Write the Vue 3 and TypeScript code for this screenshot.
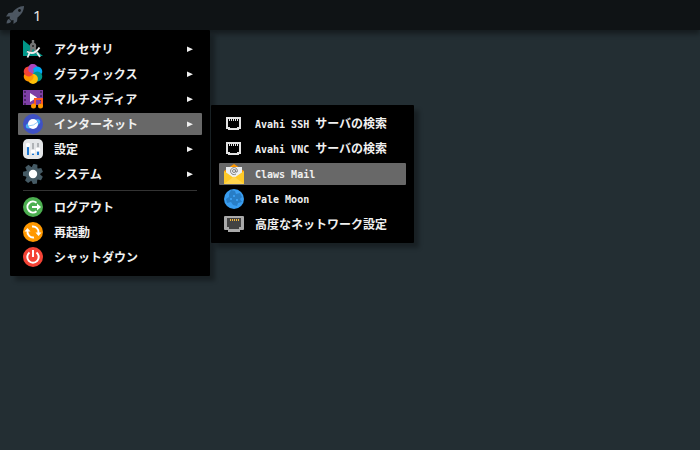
<script setup lang="ts">
import { ref } from 'vue'

interface Part {
  text: string
  latin?: boolean
}
interface Entry {
  id: string
  icon: string
  parts: Part[]
  children?: Entry[]
}

const network: Entry[] = [
  { id: 'ssh', icon: 'port', parts: [{ text: 'Avahi SSH ', latin: true }, { text: 'サーバの検索' }] },
  { id: 'vnc', icon: 'port', parts: [{ text: 'Avahi VNC ', latin: true }, { text: 'サーバの検索' }] },
  { id: 'claws', icon: 'mail', parts: [{ text: 'Claws Mail', latin: true }] },
  { id: 'moon', icon: 'moon', parts: [{ text: 'Pale Moon', latin: true }] },
  { id: 'netconf', icon: 'jack', parts: [{ text: '高度なネットワーク設定' }] },
]

const applications: Entry[] = [
  { id: 'accessories', icon: 'compass', parts: [{ text: 'アクセサリ' }], children: [] },
  { id: 'graphics', icon: 'flower', parts: [{ text: 'グラフィックス' }], children: [] },
  { id: 'multimedia', icon: 'media', parts: [{ text: 'マルチメディア' }], children: [] },
  { id: 'internet', icon: 'planet', parts: [{ text: 'インターネット' }], children: network },
  { id: 'settings', icon: 'sliders', parts: [{ text: '設定' }], children: [] },
  { id: 'system', icon: 'gear', parts: [{ text: 'システム' }], children: [] },
]

const session: Entry[] = [
  { id: 'logout', icon: 'logout', parts: [{ text: 'ログアウト' }] },
  { id: 'restart', icon: 'restart', parts: [{ text: '再起動' }] },
  { id: 'shutdown', icon: 'power', parts: [{ text: 'シャットダウン' }] },
]

const open = ref('internet')
const selected = ref('claws')
const petals = ['#ab47bc', '#03a9f4', '#009688', '#ffc107', '#ff9800', '#f44336']
</script>

<template>
  <div class="desktop">
    <svg class="sprite" aria-hidden="true">
      <symbol id="rocket" viewBox="0 0 20 20">
        <path fill="#4c5661" d="M19 1C14 1 10 4 7.500 7.500L3.500 8 1 11.500 5 11.500 4.500 13.500 6.500 15.500 8.500 15 8.500 19 12 16.500 12.500 12.500C16 10 19 6 19 1z" />
        <circle cx="14.500" cy="5.500" r="1.400" fill="#0f1315" />
        <path d="M4 14Q2 14 1.500 18.500 6 18 6 16z" fill="#4c5661" />
      </symbol>
      <symbol id="compass" viewBox="0 0 20 20">
        <path d="M0 1L20 17H0z" fill="#009688" />
        <path d="M4 11v3h4z" fill="#00201d" />
        <path d="M10 1v5M9.500 7L7 14M10.500 7l3 7" stroke="#757575" stroke-width="2.400" />
        <circle cx="10" cy="7" r="3.200" fill="#757575" />
        <circle cx="10" cy="7" r="1" fill="#222" />
        <path d="M4 12.500Q11 17 16.500 8.500M6.500 14L4.500 18.500M14 13.500l3 4.500" fill="none" stroke="#eee" stroke-width="1.800" />
      </symbol>
      <symbol id="flower" viewBox="0 0 20 20">
        <circle
          v-for="(color, i) in petals"
          :key="color"
          cx="10"
          cy="5"
          r="4.900"
          :fill="color"
          :transform="`rotate(${i * 60} 10 10)`"
        />
        <path d="M10 10V0.100A4.900 4.900 0 0 0 5.800 7.500z" fill="#ab47bc" />
      </symbol>
      <symbol id="media" viewBox="0 0 20 20">
        <rect y="1" width="20" height="15" fill="#7e3fa5" />
        <path d="M2 2v14M18 2v14" stroke="#4d2569" stroke-width="2" stroke-dasharray="2 2" />
        <path d="M7 4l7 4.500L7 13z" fill="#fff" />
        <path d="M12 17V10h7v7" fill="none" stroke="#ff5722" stroke-width="2" />
        <circle cx="10.500" cy="17" r="2.500" fill="#ff9800" />
        <circle cx="17.500" cy="17" r="2.500" fill="#ff9800" />
      </symbol>
      <symbol id="planet" viewBox="0 0 20 20">
        <circle cx="10" cy="10" r="10" fill="#3f51c5" />
        <ellipse cx="10" cy="10" rx="7" ry="2.500" fill="none" stroke="#40b6f5" stroke-width="1.600" transform="rotate(-25 10 10)" />
        <circle cx="10" cy="10" r="5" fill="#fff" />
        <path d="M4.500 12.200Q11 12 15.500 7.500" fill="none" stroke="#90caf9" stroke-width="1" />
      </symbol>
      <symbol id="sliders" viewBox="0 0 20 20">
        <rect width="20" height="20" rx="5" fill="#e4e6e8" />
        <path d="M5 4v12M10 4v12M15 4v12" stroke="#b0b3b6" stroke-width="2" />
        <path d="M5 7v9M10 13v3M15 11v5" stroke="#1e78d2" stroke-width="2" />
        <g fill="#fff">
          <circle cx="5" cy="6" r="2.200" /><circle cx="10" cy="12.500" r="2.200" /><circle cx="15" cy="10.500" r="2.200" />
        </g>
      </symbol>
      <symbol id="gear" viewBox="0 0 20 20">
        <g fill="#455a64">
          <path v-for="n in 7" :key="n" d="M6.800 4.500L8 0h4l1.200 4.500z" :transform="`rotate(${n * 51.43 + 14} 10 10)`" />
          <circle cx="10" cy="10" r="7.200" />
        </g>
        <circle cx="10" cy="10" r="4.200" fill="#fff" />
      </symbol>
      <symbol id="logout" viewBox="0 0 20 20">
        <circle cx="10" cy="10" r="10" fill="#4caf50" />
        <path d="M13.500 5.800A5.500 5.500 0 1 0 13.500 14.200M9 10h6" fill="none" stroke="#fff" stroke-width="2" />
        <path d="M14 6.500l4 3.500-4 3.500z" fill="#fff" />
      </symbol>
      <symbol id="restart" viewBox="0 0 20 20">
        <circle cx="10" cy="10" r="10" fill="#ff9800" />
        <path d="M9 4.500A5.700 5.700 0 0 1 15.500 11M11 15.500A5.700 5.700 0 0 1 4.500 9" fill="none" stroke="#fff" stroke-width="2" />
        <path d="M12.500 10.500h6L15.500 14zM1.500 9.500h6L4.500 6z" fill="#fff" />
      </symbol>
      <symbol id="power" viewBox="0 0 20 20">
        <circle cx="10" cy="10" r="10" fill="#f44336" />
        <path d="M6.500 5.500A5.700 5.700 0 1 0 13.500 5.500M10 3v7" fill="none" stroke="#fff" stroke-width="2" />
      </symbol>
      <symbol id="port" viewBox="0 0 20 20">
        <path d="M3 4H16V14H14V15H5V14H3z" fill="none" stroke="#e2e2e2" stroke-width="2" />
        <path d="M5.500 5v2M7.500 5v2M9.500 5v2M11.500 5v2M13.500 5v2" stroke="#e2e2e2" />
      </symbol>
      <symbol id="mail" viewBox="0 0 20 20">
        <path d="M0 7L10 0l10 7v5H0z" fill="#ff9800" />
        <path d="M2 3h16v12H2z" fill="#eceff1" />
        <path d="M0 7l10 7 10-7v13H0z" fill="#ffca28" />
        <path d="M0 20L10 12.500 20 20z" fill="#ffd54f" />
        <circle cx="10" cy="7" r="1.500" fill="none" stroke="#757575" stroke-width=".9" />
        <path d="M11.700 5.500v2.500q1.800 .8 1.800-1.500A3.500 3.500 0 1 0 12 10" fill="none" stroke="#757575" stroke-width=".9" />
      </symbol>
      <symbol id="moon" viewBox="0 0 20 20">
        <circle cx="10" cy="10" r="10" fill="#399df0" />
        <path fill="#287dc5" d="M7 1l4 1 1 3 4-1 2 4-2 2 2 3-4 1-1 3-4-1-2-3-4 1-1-4 3-2V5z" />
        <path fill="#399df0" d="M9 6h2v2H9zM6 9h2v2H6zM12 10h2v2h-2z" />
      </symbol>
      <symbol id="jack" viewBox="0 0 20 20">
        <path d="M1 2h18q1 0 1 1v12q0 1-1 1h-3v2H4v-2H1q-1 0-1-1V3q0-1 1-1z" fill="#a9a9a9" />
        <path d="M3 4h14v9h-2v2H5v-2H3z" fill="#424242" />
        <path d="M6.500 5v2M8.500 5v2M10.500 5v2M12.500 5v2M14.500 5v2" stroke="#f5b83d" />
      </symbol>
    </svg>

    <header class="panel">
      <button class="launcher" type="button" aria-label="メニュー">
        <svg class="icon"><use href="#rocket" /></svg>
      </button>
      <button class="workspace" type="button">1</button>
    </header>

    <nav class="menu root-menu">
      <ul class="list">
        <li v-for="entry in applications" :key="entry.id" class="row">
          <button type="button" class="item" :class="{ active: open === entry.id }" @click="open = entry.id">
            <svg class="icon" aria-hidden="true"><use :href="`#${entry.icon}`" /></svg>
            <span class="label">{{ entry.parts[0].text }}</span>
            <svg class="arrow" viewBox="0 0 6 6" aria-hidden="true"><path d="M0 .5L6 3.300 0 6z" /></svg>
          </button>
          <ul v-if="open === entry.id && entry.children?.length" class="menu submenu list">
            <li v-for="child in entry.children" :key="child.id">
              <button type="button" class="item" :class="{ active: selected === child.id }" @click="selected = child.id">
                <svg class="icon" aria-hidden="true"><use :href="`#${child.icon}`" /></svg>
                <span class="label"><span v-for="part in child.parts" :key="part.text" :class="{ latin: part.latin }">{{ part.text }}</span></span>
              </button>
            </li>
          </ul>
        </li>
      </ul>
      <hr class="divider" />
      <ul class="list">
        <li v-for="entry in session" :key="entry.id">
          <button type="button" class="item">
            <svg class="icon" aria-hidden="true"><use :href="`#${entry.icon}`" /></svg>
            <span class="label">{{ entry.parts[0].text }}</span>
          </button>
        </li>
      </ul>
    </nav>
  </div>
</template>

<style>
body {
  margin: 0;
  background: #232e33;
}
</style>

<style scoped>
.desktop {
  position: relative;
  min-height: 100vh;
  background: #232e33;
  font-family: "Noto Sans CJK JP", sans-serif;
}
.sprite {
  position: absolute;
  width: 0;
  height: 0;
}
button {
  border: 0;
  background: none;
  color: inherit;
  font: inherit;
}
.panel {
  display: flex;
  align-items: center;
  gap: 8px;
  height: 30px;
  padding: 0 5px;
  background: #0f1315;
  box-shadow: 0 4px 5px rgba(0, 0, 0, 0.4);
  color: #e6e6e6;
}
.launcher {
  display: flex;
  padding: 0;
}
.workspace {
  padding: 0;
  font: 15px/20px "Noto Sans", sans-serif;
}
.icon {
  flex: none;
  width: 20px;
  height: 20px;
}
.menu {
  box-sizing: border-box;
  padding: 8px;
  border-radius: 1px;
  background: #000;
  box-shadow: 5px 5px 4px rgba(0, 0, 0, 0.3);
}
.root-menu {
  position: absolute;
  top: 30px;
  left: 10px;
  min-width: 200px;
}
.list {
  display: flex;
  flex-direction: column;
  gap: 3px;
  margin: 0;
  list-style: none;
}
.list:not(.menu) {
  padding: 0;
}
.row {
  position: relative;
}
.submenu {
  position: absolute;
  top: -8px;
  left: calc(100% + 9px);
  min-width: 203px;
}
.item {
  display: flex;
  align-items: center;
  gap: 11px;
  width: 100%;
  height: 22px;
  padding: 0 9px 0 5px;
  border-radius: 1px;
  color: #f0f0f0;
  font-size: 12px;
  font-weight: 700;
  line-height: 20px;
  text-align: left;
  white-space: nowrap;
}
.item.active {
  background: #686868;
}
.label {
  flex: 1;
}
.latin {
  font-family: "DejaVu Sans Mono", monospace;
  font-size: 10px;
  white-space: pre;
}
.arrow {
  width: 6px;
  height: 6px;
  fill: #f0f0f0;
}
.divider {
  height: 1px;
  margin: 5px;
  border: 0;
  background: #333;
}
</style>
